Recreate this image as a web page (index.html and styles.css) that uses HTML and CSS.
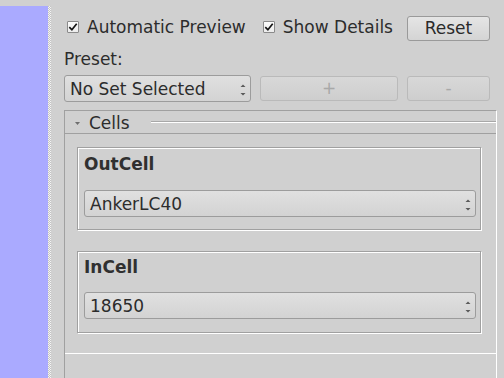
FILE: index.html
```html
<!DOCTYPE html>
<html>
<head>
<meta charset="utf-8">
<link rel="stylesheet" href="styles.css">
</head>
<body>
<div class="app">
  <div class="dock"></div>
  <div class="splitter"></div>
  <div class="main">
    <div class="toprow">
      <div class="check">
        <span class="box"><svg width="10" height="10" viewBox="0 0 10 10"><path d="M1.3 5.2 L3.9 7.8 L8.7 1.8" fill="none" stroke="#141414" stroke-width="1.7"/></svg></span>
        <span class="check-text">Automatic Preview</span>
      </div>
      <div class="check check2">
        <span class="box"><svg width="10" height="10" viewBox="0 0 10 10"><path d="M1.3 5.2 L3.9 7.8 L8.7 1.8" fill="none" stroke="#141414" stroke-width="1.7"/></svg></span>
        <span class="check-text">Show Details</span>
      </div>
      <div class="btn reset">Reset</div>
    </div>
    <div class="preset-label">Preset:</div>
    <div class="preset-row">
      <div class="combo combo-preset"><span>No Set Selected</span><svg class="arrows" width="6" height="12" viewBox="0 0 6 12"><path d="M0.5 3 L3 0.5 L5.5 3 Z M0.5 9 L5.5 9 L3 11.5 Z" fill="#5a5a5a"/></svg></div>
      <div class="btn disabled plus">+</div>
      <div class="btn disabled minus">-</div>
    </div>
    <div class="section">
      <div class="section-head">
        <svg class="tri" width="5" height="3" viewBox="0 0 5 3"><path d="M0 0 L5 0 L2.5 3 Z" fill="#6e6e6e"/></svg>
        <span class="section-title">Cells</span>
        <span class="etch"></span>
      </div>
      <div class="section-body">
        <div class="group">
          <div class="group-title">OutCell</div>
          <div class="combo"><span>AnkerLC40</span><svg class="arrows" width="6" height="12" viewBox="0 0 6 12"><path d="M0.5 3 L3 0.5 L5.5 3 Z M0.5 9 L5.5 9 L3 11.5 Z" fill="#5a5a5a"/></svg></div>
        </div>
        <div class="group group2">
          <div class="group-title">InCell</div>
          <div class="combo"><span>18650</span><svg class="arrows" width="6" height="12" viewBox="0 0 6 12"><path d="M0.5 3 L3 0.5 L5.5 3 Z M0.5 9 L5.5 9 L3 11.5 Z" fill="#5a5a5a"/></svg></div>
        </div>
      </div>
    </div>
  </div>
</div>
</body>
</html>
```
FILE: styles.css
```css
html, body {
  margin: 0;
  height: 100%;
}
body {
  background: #d0d0d0;
  font-family: "DejaVu Sans", sans-serif;
  font-size: 17px;
  color: #2c2c2c;
  overflow: hidden;
}
.app {
  display: flex;
  height: 378px;
}
.dock {
  width: 48px;
  margin-top: 6px;
  background: #aaaaff;
}
.splitter {
  width: 3px;
  margin-top: 6px;
  background: conic-gradient(#f4f4f4 25%, #c4c4c4 0 50%, #f4f4f4 0 75%, #c4c4c4 0) 0 0 / 2px 2px;
}
.main {
  flex: 1;
  display: flex;
  flex-direction: column;
  padding: 16px 7px 0 13px;
  min-width: 0;
}
.toprow {
  display: flex;
  align-items: flex-start;
  height: 25px;
  padding-right: 7px;
}
.check {
  display: flex;
  align-items: flex-start;
  margin-left: 3px;
}
.check2 {
  margin-left: 17px;
}
.box {
  box-sizing: border-box;
  width: 12px;
  height: 12px;
  margin-top: 5px;
  margin-right: 8px;
  border: 1px solid #8a8a8a;
  border-radius: 1px;
  background: linear-gradient(#fbfbfb, #ececec);
  display: flex;
  align-items: center;
  justify-content: center;
}
.check-text {
  line-height: 20px;
  margin-top: 1px;
  white-space: nowrap;
}
.btn {
  box-sizing: border-box;
  height: 25px;
  border: 1px solid #9a9a9a;
  border-radius: 3px;
  background: linear-gradient(#e5e5e5, #d4d4d4);
  text-align: center;
  line-height: 20px;
  padding-top: 1px;
}
.reset {
  margin-left: auto;
  width: 83px;
  color: #2a2a2a;
}
.disabled {
  border-color: #bababa;
  background: linear-gradient(#d8d8d8, #cecece);
  color: #a8a8a8;
}
.plus {
  width: 138px;
}
.minus {
  width: 83px;
}
.preset-label {
  line-height: 20px;
  margin-top: 8px;
}
.preset-row {
  display: flex;
  align-items: center;
  gap: 9px;
  margin-top: 6px;
  padding-right: 7px;
}
.combo {
  box-sizing: border-box;
  height: 27px;
  display: flex;
  align-items: flex-start;
  justify-content: space-between;
  border: 1px solid #9c9c9c;
  border-radius: 3px;
  background: linear-gradient(#e0e0e0, #d3d3d3);
  padding: 3px 0 0 5px;
  line-height: 20px;
}
.combo-preset {
  width: 187px;
}
.arrows {
  align-self: center;
  margin-right: 4px;
}
.section {
  flex: 1;
  margin-top: 8px;
  border-top: 1px solid #a0a0a0;
  border-left: 1px solid #a0a0a0;
  border-right: 1px solid #ffffff;
}
.section-head {
  display: flex;
  align-items: flex-start;
  height: 22px;
}
.tri {
  margin-left: 10px;
  margin-top: 11px;
}
.section-title {
  margin-left: 9px;
  margin-top: 2px;
  line-height: 20px;
}
.etch {
  flex: 1;
  margin-left: 21px;
  margin-top: 10px;
  height: 0;
  border-top: 1px solid #a8a8a8;
  border-bottom: 1px solid #ffffff;
}
.section-body {
  border-top: 1px solid #a0a0a0;
  border-bottom: 1px solid #ffffff;
  padding: 13px 15px 20px 12px;
}
.group {
  border: 1px solid #a0a0a0;
  box-shadow: inset 1px 1px 0 #ffffff, 1px 1px 0 #ffffff;
  padding: 6px 4px 12px 6px;
}
.group2 {
  margin-top: 21px;
  padding-top: 5px;
  padding-bottom: 13px;
}
.group-title {
  font-weight: bold;
  line-height: 20px;
  color: #303030;
}
.group .combo {
  margin-top: 16px;
}
.group2 .combo {
  margin-top: 15px;
}
```
